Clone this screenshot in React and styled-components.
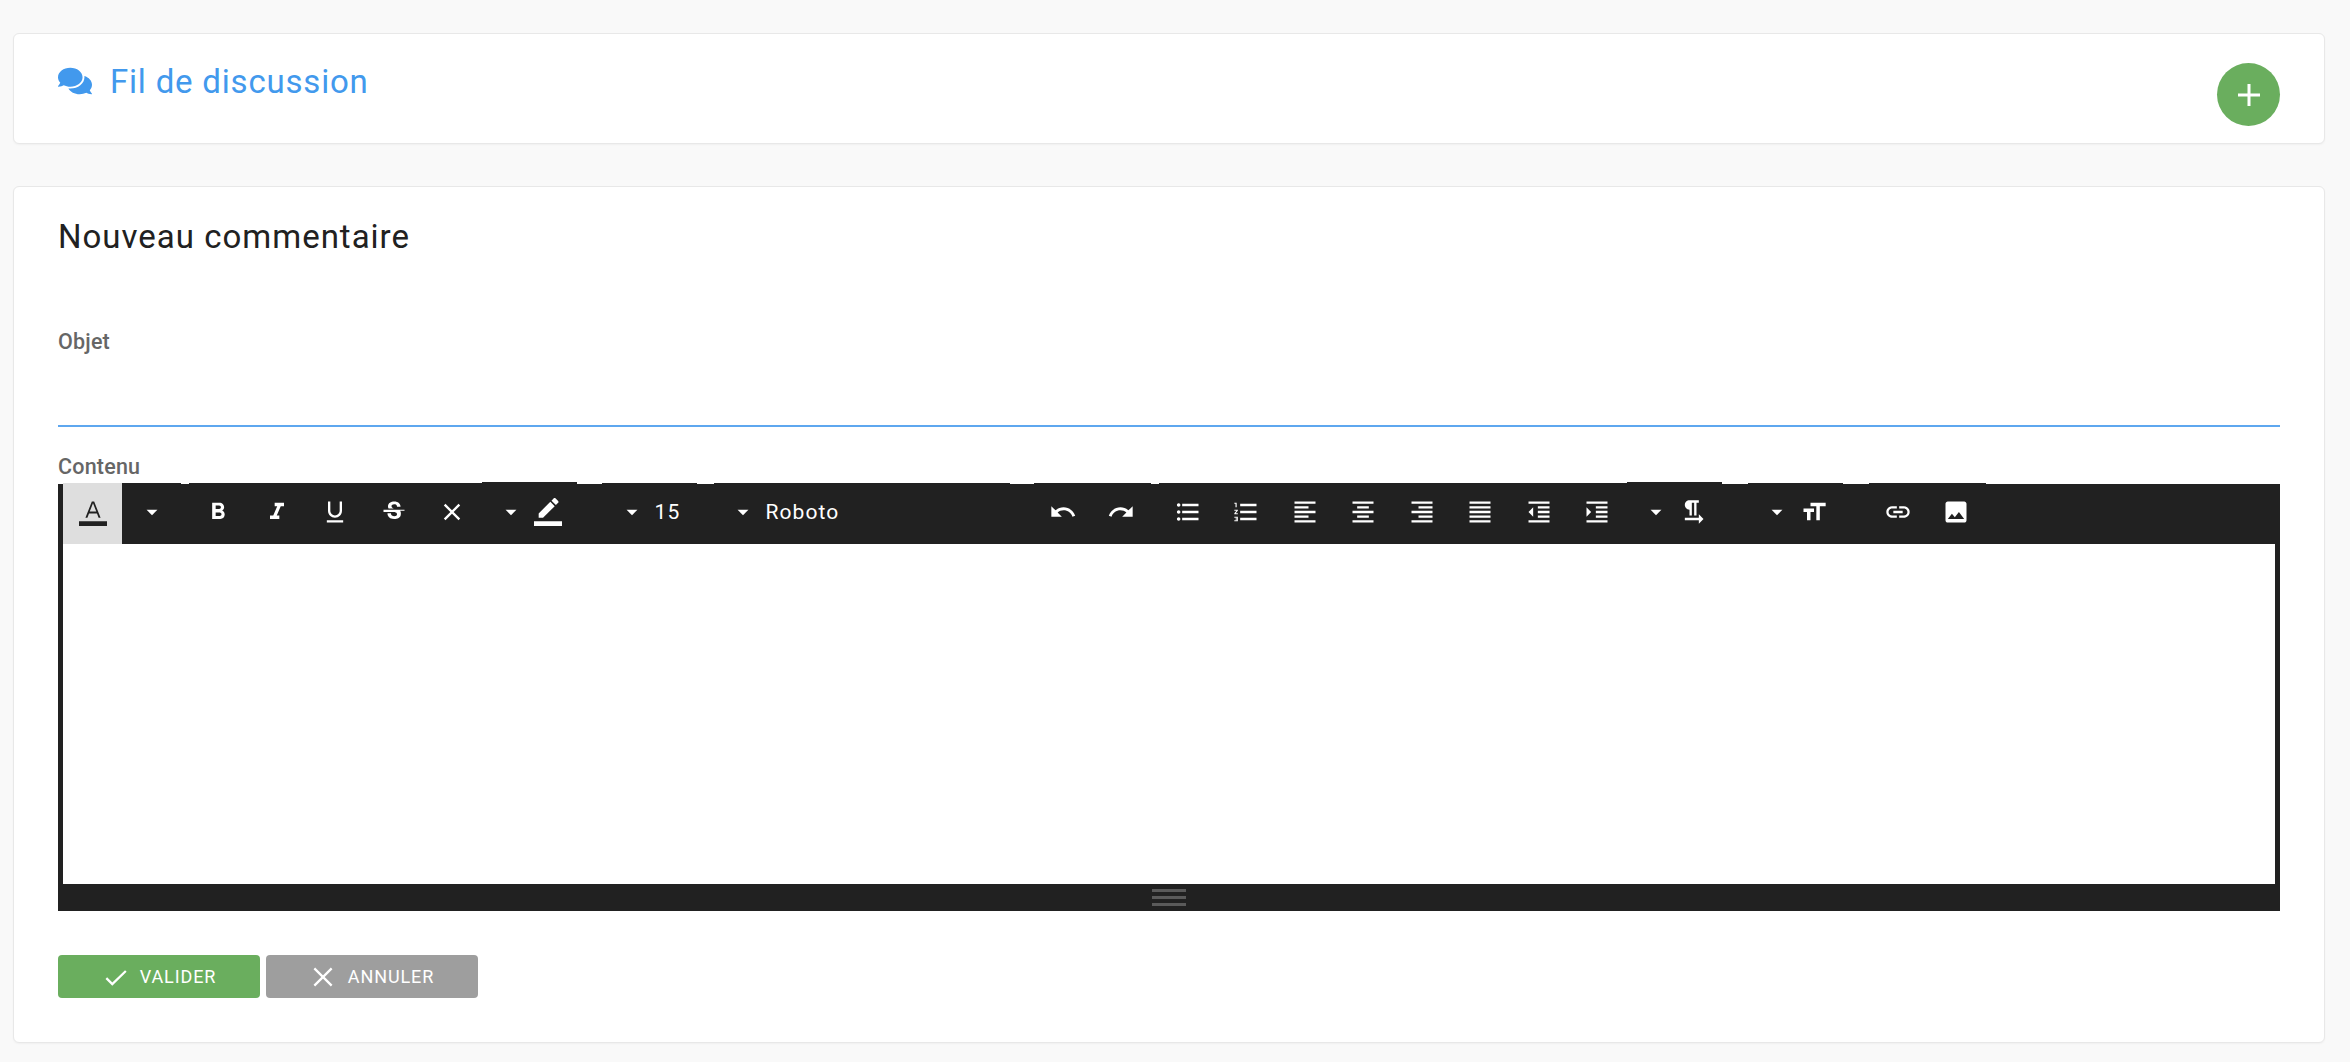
import React from "react";
import styled, { createGlobalStyle } from "styled-components";
import { FaComments } from "react-icons/fa";

const GlobalStyle = createGlobalStyle`
  html, body {
    margin: 0;
    background: #f9f9f9;
    font-family: Roboto, "Liberation Sans", sans-serif;
  }
`;

const Page = styled.div`
  width: 2350px;
  height: 1062px;
  box-sizing: border-box;
  padding: 33px 25px 0 13px;
  overflow: hidden;
`;
const Card = styled.section`
  box-sizing: border-box;
  background: #fff;
  border: 1px solid #e8e8e8;
  border-radius: 6px;
  box-shadow: 0 1px 2px rgba(0, 0, 0, 0.04);
`;
const HeaderCard = styled(Card)`
  height: 111px;
  padding: 0 44px 0 44px;
  display: flex;
  justify-content: space-between;
`;
const HeaderTitle = styled.h2`
  margin: 27px 0 0;
  height: 40px;
  display: flex;
  align-items: center;
  gap: 18px;
  font-size: 33px;
  font-weight: 400;
  letter-spacing: 0.8px;
  color: #4299ed;
`;
const AddButton = styled.button`
  margin-top: 29px;
  width: 63px;
  height: 63px;
  padding: 0;
  border: 0;
  border-radius: 50%;
  background: #6aae5e;
  display: flex;
  align-items: center;
  justify-content: center;
`;
const FormCard = styled(Card)`
  margin-top: 42px;
  height: 857px;
  padding: 0 44px 0 44px;
`;
const FormTitle = styled.h3`
  margin: 30px 0 0;
  height: 40px;
  line-height: 40px;
  font-size: 33px;
  font-weight: 400;
  letter-spacing: 1px;
  color: #212121;
`;
const FieldLabel = styled.label`
  display: block;
  height: 24px;
  line-height: 24px;
  font-size: 21.5px;
  font-weight: 500;
  letter-spacing: 0.2px;
  color: #666;
`;
const ObjetLabel = styled(FieldLabel)`
  margin-top: 73px;
`;
const ObjetInput = styled.div`
  height: 73px;
  box-sizing: border-box;
  border-bottom: 2px solid #5ea7ef;
`;
const ContenuLabel = styled(FieldLabel)`
  margin-top: 28px;
  height: 27px;
`;
const Editor = styled.div`
  background: #212121;
  padding: 0 5px;
  margin-top: 2px;
`;
const Toolbar = styled.div`
  height: 60px;
  display: flex;
  align-items: flex-start;
`;
const ToolGroup = styled.div`
  flex: none;
  display: flex;
  background: #212121;
  height: ${({ $raised }) => ($raised ? 62 : 61)}px;
  margin-top: ${({ $raised }) => ($raised ? -2 : -1)}px;
  margin-left: ${({ $gap }) => $gap || 0}px;
  padding-left: ${({ $inset }) => $inset || 0}px;
  width: ${({ $w }) => ($w ? `${$w}px` : "auto")};
  box-sizing: border-box;
`;
const ToolButton = styled.button`
  flex: none;
  width: ${({ $w }) => $w || 58.5}px;
  height: 61px;
  padding: 0 0 3px;
  border: 0;
  display: flex;
  align-items: center;
  justify-content: center;
  color: ${({ $active }) => ($active ? "#212121" : "#fff")};
  background: ${({ $active }) => ($active ? "#dedede" : "transparent")};
  font-family: inherit;
  font-size: 21px;
  letter-spacing: 1.1px;
`;
const Raised = styled(ToolButton)`
  align-self: flex-end;
`;
const ToolText = styled(ToolButton)`
  justify-content: flex-start;
  width: auto;
  padding-bottom: 3px;
`;
const EditArea = styled.div`
  height: 340px;
  background: #fff;
`;
const ResizeBar = styled.div`
  height: 27px;
  display: flex;
  flex-direction: column;
  align-items: center;
  justify-content: center;
  gap: 4px;
`;
const ResizeLine = styled.span`
  display: block;
  width: 34px;
  height: 3px;
  background: #5a5a5a;
`;
const Actions = styled.div`
  margin-top: 44px;
  display: flex;
  gap: 6px;
`;
const ActionButton = styled.button`
  width: ${({ $w }) => $w}px;
  height: 43px;
  padding: 0;
  border: 0;
  border-radius: 4px;
  background: ${({ $bg }) => $bg};
  color: #fff;
  font-family: inherit;
  font-size: 18px;
  letter-spacing: 0.9px;
  display: flex;
  align-items: center;
  justify-content: center;
  gap: 12px;
`;

const Icon = ({ d, size = 28 }) => (
  <svg width={size} height={size} viewBox="0 0 24 24" fill="currentColor">
    <path d={d} />
  </svg>
);

const icons = {
  color: "M11 3L5.5 17h1.7l1.4-3.8h6.8l1.4 3.8h1.7L13 3h-2zM9.2 11.6L12 4.6l2.8 7H9.2zM0 20h24v4H0z",
  caret: "M7 10l5 5 5-5z",
  bold: "M15.6 10.79c.97-.67 1.65-1.77 1.65-2.79 0-2.26-1.75-4-4-4H7v14h7.04c2.09 0 3.71-1.7 3.71-3.79 0-1.52-.86-2.82-2.15-3.42zM10 6.5h3c.83 0 1.5.67 1.5 1.5s-.67 1.5-1.5 1.5h-3v-3zm3.5 9H10v-3h3.5c.83 0 1.5.67 1.5 1.5s-.67 1.5-1.5 1.5z",
  italic: "M10 4v3h2.21l-3.42 8H6v3h8v-3h-2.21l3.42-8H18V4z",
  underline: "M12 17c3.31 0 6-2.69 6-6V3h-2v8c0 2.2-1.8 4-4 4s-4-1.8-4-4V3H6v8c0 3.31 2.69 6 6 6zm-7 2v2h14v-2H5z",
  strike: "M6.85 7.08C6.85 4.37 9.45 3 12.24 3c1.64 0 3 .49 3.9 1.28.77.65 1.46 1.73 1.46 3.24h-3.01c0-.31-.05-.59-.15-.85-.29-.86-1.2-1.28-2.25-1.28-1.86 0-2.34 1.02-2.34 1.7 0 .48.25.88.74 1.21.38.25.77.48 1.41.7H7.39c-.21-.34-.54-.89-.54-1.92zM21 12v-2H3v2h9.62c1.15.45 1.96.75 1.96 1.97 0 1-.81 1.67-2.28 1.67-1.54 0-2.93-.54-2.93-2.51H6.4c0 .55.08 1.13.24 1.58.81 2.29 3.22 3.3 5.67 3.3 2.35 0 5.59-.92 5.59-4.58 0-.34-.03-1.7-.7-2.43H21z",
  close: "M19 6.41L17.59 5 12 10.59 6.41 5 5 6.41 10.59 12 5 17.59 6.41 19 12 13.41 17.59 19 19 17.59 13.41 12z",
  pen: "M17.75 7L14 3.25l-10 10V17h3.75l10-10zm2.96-2.96c.39-.39.39-1.02 0-1.41L18.37.29c-.39-.39-1.02-.39-1.41 0L15 2.25 18.75 6l1.96-1.96zM0 20h24v4H0z",
  undo: "M12.5 8c-2.65 0-5.05.99-6.9 2.6L2 7v9h9l-3.62-3.62c1.39-1.16 3.16-1.88 5.12-1.88 3.54 0 6.55 2.31 7.6 5.5l2.37-.78C21.08 11.03 17.15 8 12.5 8z",
  redo: "M18.4 10.6C16.55 8.99 14.15 8 11.5 8c-4.65 0-8.58 3.03-9.96 7.22L3.9 16c1.05-3.19 4.05-5.5 7.6-5.5 1.95 0 3.73.72 5.12 1.88L13 16h9V7l-3.6 3.6z",
  ul: "M4 10.5c-.83 0-1.5.67-1.5 1.5s.67 1.5 1.5 1.5 1.5-.67 1.5-1.5-.67-1.5-1.5-1.5zm0-6c-.83 0-1.5.67-1.5 1.5S3.17 7.5 4 7.5 5.5 6.83 5.5 6 4.83 4.5 4 4.5zm0 12c-.83 0-1.5.68-1.5 1.5s.68 1.5 1.5 1.5 1.5-.68 1.5-1.5-.67-1.5-1.5-1.5zM7 19h14v-2H7v2zm0-6h14v-2H7v2zm0-8v2h14V5H7z",
  ol: "M2 17h2v.5H3v1h1v.5H2v1h3v-4H2v1zm1-9h1V4H2v1h1v3zm-1 3h1.8L2 13.1v.9h3v-1H3.2L5 10.9V10H2v1zm5-6v2h14V5H7zm0 14h14v-2H7v2zm0-6h14v-2H7v2z",
  left: "M15 15H3v2h12v-2zm0-8H3v2h12V7zM3 13h18v-2H3v2zm0 8h18v-2H3v2zM3 3v2h18V3H3z",
  center: "M7 15v2h10v-2H7zm-4 6h18v-2H3v2zm0-8h18v-2H3v2zm4-6v2h10V7H7zM3 3v2h18V3H3z",
  right: "M3 21h18v-2H3v2zm6-4h12v-2H9v2zm-6-4h18v-2H3v2zm6-4h12V7H9v2zM3 3v2h18V3H3z",
  justify: "M3 21h18v-2H3v2zm0-4h18v-2H3v2zm0-4h18v-2H3v2zm0-4h18V7H3v2zm0-6v2h18V3H3z",
  outdent: "M11 17h10v-2H11v2zm-8-5l4 4V8l-4 4zm0 9h18v-2H3v2zM3 3v2h18V3H3zm8 6h10V7H11v2zm0 4h10v-2H11v2z",
  indent: "M3 21h18v-2H3v2zM3 8v8l4-4-4-4zm8 9h10v-2H11v2zM3 3v2h18V3H3zm8 6h10V7H11v2zm0 4h10v-2H11v2z",
  para: "M9 10v5h2V4h2v11h2V4h2V2H9C6.79 2 5 3.79 5 6s1.79 4 4 4zm12 8l-4-4v3H5v2h12v3l4-4z",
  size: "M9 4v3h5v12h3V7h5V4H9zm-6 8h3v7h3v-7h3V9H3v3z",
  link: "M3.9 12c0-1.71 1.39-3.1 3.1-3.1h4V7H7c-2.76 0-5 2.24-5 5s2.24 5 5 5h4v-1.9H7c-1.71 0-3.1-1.39-3.1-3.1zM8 13h8v-2H8v2zm9-6h-4v1.9h4c1.71 0 3.1 1.39 3.1 3.1s-1.39 3.1-3.1 3.1h-4V17h4c2.76 0 5-2.24 5-5s-2.24-5-5-5z",
  image: "M21 19V5c0-1.1-.9-2-2-2H5c-1.1 0-2 .9-2 2v14c0 1.1.9 2 2 2h14c1.1 0 2-.9 2-2zM8.5 13.5l2.5 3.01L14.5 12l4.5 6H5l3.5-4.5z",
};

const Tool = ({ name, ...rest }) => (
  <ToolButton {...rest}>
    <Icon d={icons[name]} />
  </ToolButton>
);

// caret + icon block, the same 95px wide group is used three times
const DropGroup = ({ name, gap, raised }) => (
  <ToolGroup $w={95} $inset={7} $gap={gap} $raised={raised}>
    <Raised $w={44}>
      <Icon d={icons.caret} size={26} />
    </Raised>
    <Raised $w={30}>
      <Icon d={icons[name]} />
    </Raised>
  </ToolGroup>
);

const ActionIcon = ({ d, weight }) => (
  <svg width="26" height="26" viewBox="0 0 24 24" fill="none" stroke="currentColor" strokeWidth={weight}>
    <path d={d} />
  </svg>
);

export default function App() {
  return (
    <Page>
      <GlobalStyle />
      <HeaderCard>
        <HeaderTitle>
          <FaComments size={34} />
          Fil de discussion
        </HeaderTitle>
        <AddButton>
          <svg width="24" height="24" viewBox="0 0 24 24" stroke="#fff" strokeWidth="3">
            <path d="M12 1v22M1 12h22" />
          </svg>
        </AddButton>
      </HeaderCard>

      <FormCard>
        <FormTitle>Nouveau commentaire</FormTitle>
        <ObjetLabel>Objet</ObjetLabel>
        <ObjetInput />
        <ContenuLabel>Contenu</ContenuLabel>
        <Editor>
          <Toolbar>
            <ToolGroup>
              <Tool name="color" $active $w={59} />
              <ToolButton $w={59}>
                <Icon d={icons.caret} size={26} />
              </ToolButton>
            </ToolGroup>
            <ToolGroup $gap={8}>
              <Tool name="bold" />
              <Tool name="italic" />
              <Tool name="underline" />
              <Tool name="strike" />
              <Tool name="close" />
            </ToolGroup>
            <DropGroup name="pen" raised />
            <ToolGroup $w={95} $inset={7} $gap={25}>
              <ToolButton $w={46}>
                <Icon d={icons.caret} size={26} />
              </ToolButton>
              <ToolText>15</ToolText>
            </ToolGroup>
            <ToolGroup $w={296} $inset={7} $gap={17}>
              <ToolButton $w={45}>
                <Icon d={icons.caret} size={26} />
              </ToolButton>
              <ToolText>Roboto</ToolText>
            </ToolGroup>
            <ToolGroup $gap={24}>
              <Tool name="undo" />
              <Tool name="redo" />
            </ToolGroup>
            <ToolGroup $gap={8}>
              <Tool name="ul" />
              <Tool name="ol" />
              <Tool name="left" />
              <Tool name="center" />
              <Tool name="right" />
              <Tool name="justify" />
              <Tool name="outdent" />
              <Tool name="indent" />
            </ToolGroup>
            <DropGroup name="para" raised />
            <DropGroup name="size" gap={26} />
            <ToolGroup $gap={26}>
              <Tool name="link" />
              <Tool name="image" />
            </ToolGroup>
          </Toolbar>
          <EditArea />
          <ResizeBar>
            <ResizeLine />
            <ResizeLine />
            <ResizeLine />
          </ResizeBar>
        </Editor>
        <Actions>
          <ActionButton $w={202} $bg="#6aae5e">
            <ActionIcon d="M4 13l5.5 5.5L22 6.5" weight="2.1" />
            VALIDER
          </ActionButton>
          <ActionButton $w={212} $bg="#9e9e9e">
            <ActionIcon d="M4 4l16 16M20 4L4 20" weight="2.1" />
            ANNULER
          </ActionButton>
        </Actions>
      </FormCard>
    </Page>
  );
}
